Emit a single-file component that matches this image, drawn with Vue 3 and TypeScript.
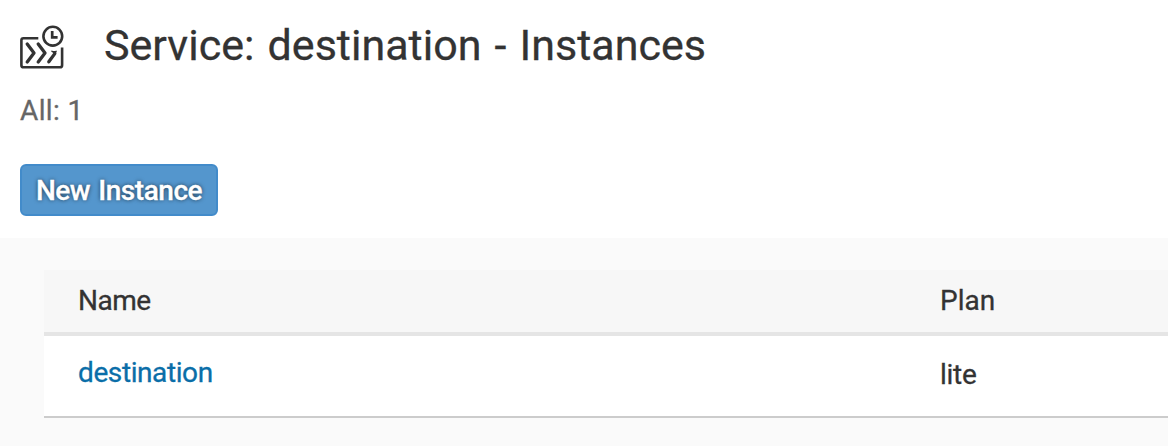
<script setup lang="ts">
interface ServiceInstance {
  name: string
  plan: string
}

const service = 'destination'
const instances: ServiceInstance[] = [{ name: 'destination', plan: 'lite' }]
</script>

<template>
  <main class="page">
    <header class="head">
      <div class="title-row">
        <svg class="icon" width="48" height="48" viewBox="0 0 48 48" fill="none" stroke="#333" stroke-width="2.6" stroke-linecap="round" stroke-linejoin="round">
          <path d="M18.3 14.2H3.5Q1.4 14.2 1.4 16.3V41.2Q1.4 43.3 3.5 43.3H40Q42.1 43.3 42.1 41.2V23.5" stroke-linecap="butt" />
          <circle cx="32.8" cy="12.2" r="9.4" />
          <path d="M32.2 7V13.4H37.6" stroke-width="2.7" stroke-linecap="butt" stroke-linejoin="miter" />
          <path d="M7.2 20L14 29L7.2 38M18.2 20L25 29L18.2 38" stroke-width="3.3" />
          <path d="M34.8 29.6L28.8 37.8" stroke-width="3.3" />
          <path d="M31.8 27.2Q34 28 36.2 27.2L35.2 29.6Z" fill="#333" stroke-width="1.2" />
        </svg>
        <h1>Service: {{ service }} - Instances</h1>
      </div>
      <p class="count">All: {{ instances.length }}</p>
      <button class="create" type="button"><span>New Instance</span></button>
    </header>
    <section class="content">
      <div class="table">
        <div class="row header">
          <span class="h-name">Name</span>
          <span class="h-plan">Plan</span>
        </div>
        <div v-for="item in instances" :key="item.name" class="row body">
          <a>{{ item.name }}</a>
          <span class="plan">{{ item.plan }}</span>
        </div>
      </div>
    </section>
  </main>
</template>

<style>
body {
  margin: 0;
  background: #fff;
}
</style>

<style scoped>
.page {
  height: 446px;
  overflow: hidden;
  display: flex;
  flex-direction: column;
  font-family: Roboto, "Liberation Sans", sans-serif;
  font-size: 28px;
  color: #333;
  -webkit-text-stroke: 0.3px currentColor;
}
.head {
  box-sizing: border-box;
  height: 238px;
  padding: 15px 20px 0;
}
.title-row {
  display: flex;
  height: 60px;
}
.icon {
  flex: none;
  margin-top: 9px;
}
h1 {
  margin: 0 0 0 36px;
  font-size: 43px;
  font-weight: 400;
  line-height: 60px;
  letter-spacing: 0.02px;
  word-spacing: 2.4px;
  white-space: nowrap;
}
.count {
  margin: 16px 0 0;
  line-height: 40px;
  letter-spacing: 0.4px;
  color: #666;
}
.create {
  display: flex;
  align-items: center;
  justify-content: center;
  box-sizing: border-box;
  width: 198px;
  height: 52px;
  margin-top: 33px;
  padding: 0;
  border: 2px solid #428bca;
  border-radius: 6px;
  background: #5496cd;
  color: #fff;
  font: inherit;
  font-weight: 500;
  letter-spacing: -0.45px;
  word-spacing: 1.5px;
  text-shadow: 0 0 4px rgba(0, 0, 0, 0.65);
  white-space: nowrap;
}
.content {
  flex: 1;
  padding: 32px 0 0 44px;
  background: #fafafa;
}
.row {
  display: grid;
  grid-template-columns: 862px 1fr;
  box-sizing: border-box;
  padding-left: 34px;
}
.header {
  height: 66px;
  border-bottom: 4px solid #e5e5e5;
  background: #f7f7f7;
  line-height: 61px;
}
.h-name {
  letter-spacing: -0.5px;
}
.body {
  height: 82px;
  border-bottom: 2px solid #ccc;
  background: #fff;
  line-height: 73px;
}
.body a {
  color: #0a6ea8;
  letter-spacing: -0.4px;
}
.plan {
  padding-top: 2px;
  letter-spacing: -0.3px;
}
</style>
